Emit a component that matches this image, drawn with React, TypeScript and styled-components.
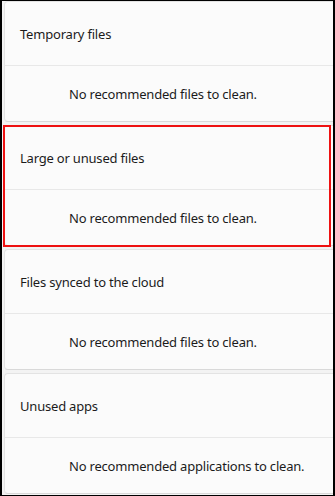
import styled, { createGlobalStyle } from "styled-components";

const GlobalStyle = createGlobalStyle`
  html, body {
    margin: 0;
    padding: 0;
    background: #fff;
  }
`;

const Frame = styled.div`
  width: 335px;
  height: 496px;
  box-sizing: border-box;
  border-style: solid;
  border-color: #000;
  border-width: 1px 2px 1px 2px;
  background: #f3f3f3;
  overflow: hidden;
  font-family: "Segoe UI", "Noto Sans", sans-serif;
  color: #1b1b1b;
`;

const List = styled.div`
  display: flex;
  flex-direction: column;
  gap: 3px;
  width: 345px;
  padding-left: 2px;
`;

const Card = styled.section<{ $marked?: boolean }>`
  position: relative;
  display: flex;
  flex-direction: column;
  background: #fbfbfb;
  border: 1px solid #e3e3e3;
  border-bottom-color: #d9d9d9;
  border-radius: 4px;

  &::after {
    content: "";
    display: ${(p) => (p.$marked ? "block" : "none")};
    position: absolute;
    left: -2px;
    top: -1px;
    bottom: -2px;
    width: 328px;
    box-sizing: border-box;
    border: 2px solid #ee1111;
    pointer-events: none;
  }
`;

const Header = styled.div`
  height: 63px;
  display: flex;
  align-items: center;
  padding-left: 15px;
  font-size: 13px;
  letter-spacing: -0.2px;
`;

const Body = styled.div`
  height: 55px;
  display: flex;
  align-items: center;
  padding-left: 64px;
  border-top: 1px solid #e8e8e8;
  font-size: 13px;
  letter-spacing: -0.2px;
`;

const sections = [
  { title: "Temporary files", note: "No recommended files to clean." },
  { title: "Large or unused files", note: "No recommended files to clean.", marked: true },
  { title: "Files synced to the cloud", note: "No recommended files to clean." },
  { title: "Unused apps", note: "No recommended applications to clean." },
];

export default function App() {
  return (
    <>
      <GlobalStyle />
      <Frame>
        <List>
          {sections.map((s) => (
            <Card key={s.title} $marked={s.marked}>
              <Header>{s.title}</Header>
              <Body>{s.note}</Body>
            </Card>
          ))}
        </List>
      </Frame>
    </>
  );
}
